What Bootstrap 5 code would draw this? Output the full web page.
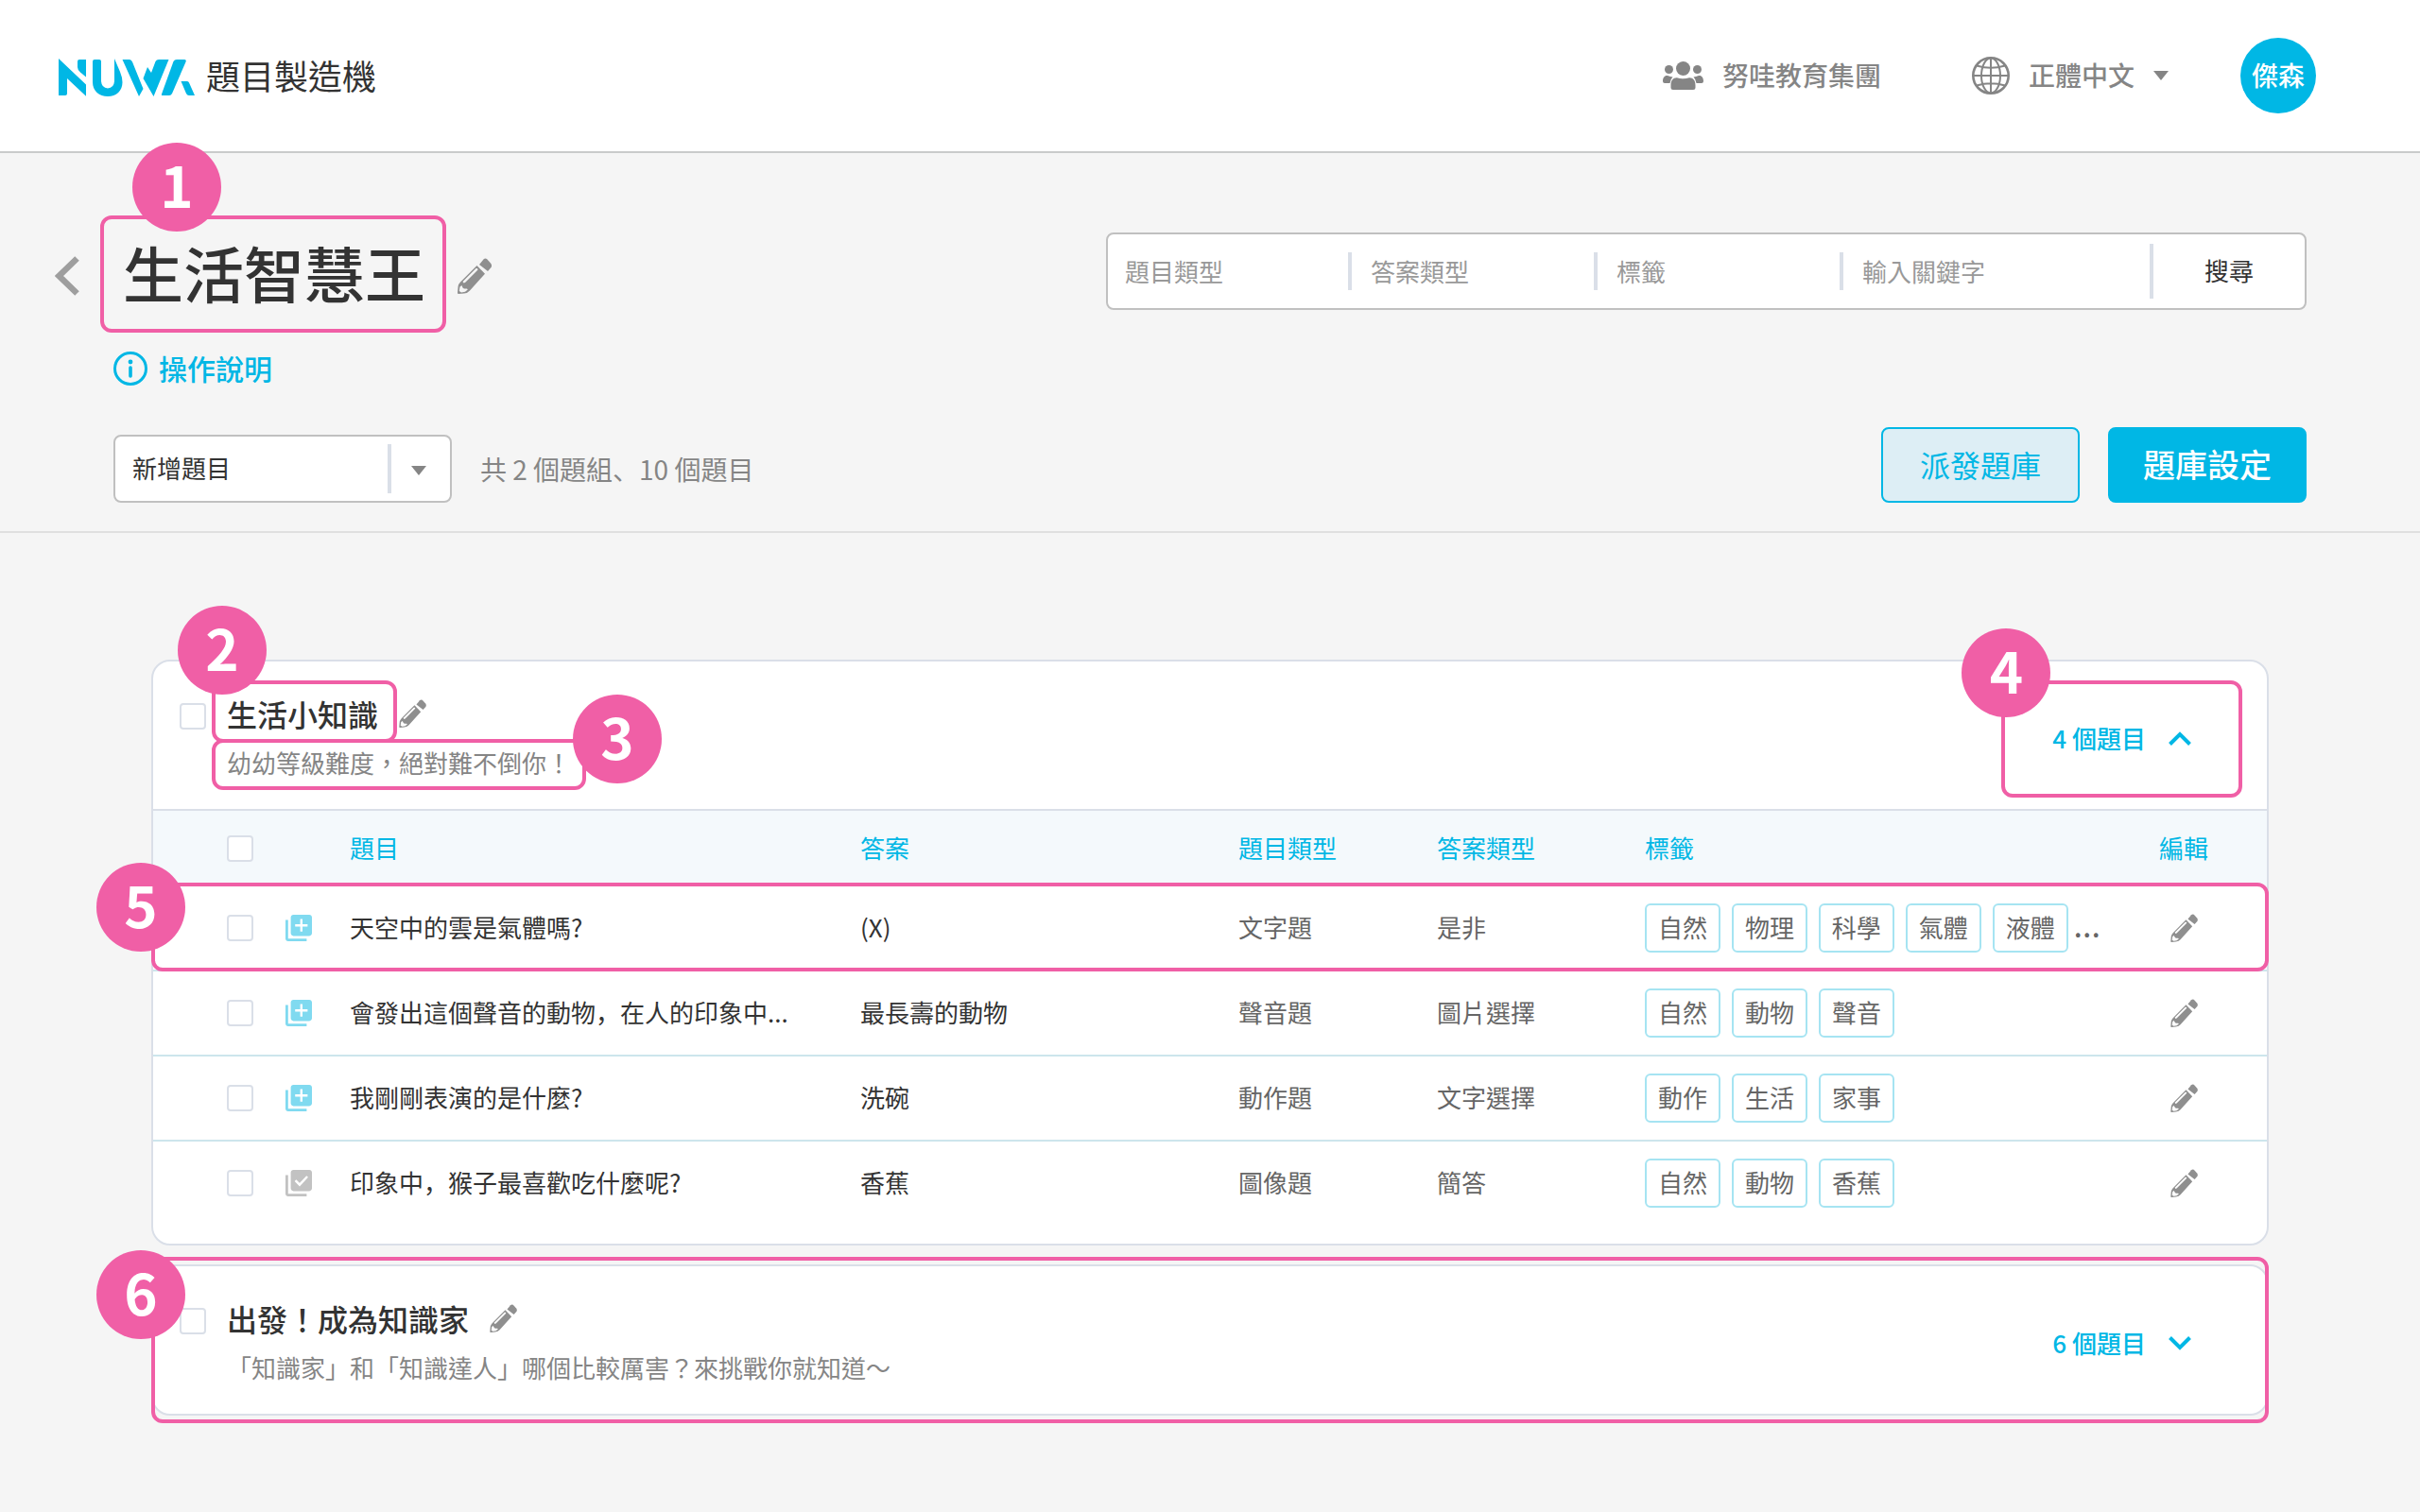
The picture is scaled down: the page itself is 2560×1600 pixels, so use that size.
<!DOCTYPE html>
<html lang="zh-Hant">
<head>
<meta charset="utf-8">
<meta name="viewport" content="width=device-width, initial-scale=1">
<title>NUWA 題目製造機</title>
<link href="https://cdn.jsdelivr.net/npm/bootstrap@5.3.0/dist/css/bootstrap.min.css" rel="stylesheet">
<style>
:root{--brand:#00b7e5;--ink:#333;--soft:#858585;--line:#dadfe8;--note:#f05fa6}
body{font-family:"Noto Sans CJK TC",sans-serif;font-size:26px;line-height:40px;color:var(--ink);background:#f5f5f5}
/* full-width punctuation sits at the lower left instead of the centre */
.font-alt{font-family:"Noto Sans CJK SC","Noto Sans CJK TC",sans-serif;font-feature-settings:"locl" 0}
svg{display:block;flex:none}
.plain-btn{border:0;background:none;padding:0;color:inherit;font-weight:500;line-height:40px}
.fs-28{font-size:28px}
.fw-mid{font-weight:500}
.text-soft{color:var(--soft)}
.lift{padding-bottom:2px}

.topbar{height:162px;padding:0 110px 0 62px;background:#fff;border-bottom:2px solid #c9cbcb}
.brand-name{font-size:36px;color:var(--ink)}
.avatar{width:80px;height:80px;margin-left:76px;border-radius:50%;background:var(--brand);color:#fff}

.bank{padding:66px 120px 30px;border-bottom:2px solid #e0e0e0}
.back-link{margin-left:-62px;margin-right:22px}
.bank-title{font-size:64px;line-height:92px;font-weight:500;margin:0;padding:9px 18px 15px 20px;border:4px solid var(--note);border-radius:12px}
.help-row{height:36px;margin:20px 0 44px;font-size:30px}
.help-row a{color:var(--brand);text-decoration:none}

.search-box{flex:0 1 1270px;height:82px;margin-top:18px;background:#fff;border:2px solid #c0c0c0;border-radius:8px}
.search-box input{width:260px;height:40px;padding:0 20px;border:0;border-right:4px solid var(--line);border-radius:0;background:none;font-size:26px;line-height:40px;color:var(--ink);box-shadow:none}
.search-box input:first-of-type{width:258px;padding-left:18px}
.search-box input::placeholder{color:#999;opacity:1}
.search-box input:last-of-type{border-right:0;flex:1}
.search-go{width:164px;height:58px;padding-bottom:2px;border-left:4px solid var(--line);font-weight:400}

.add-select{width:358px;margin-right:30px}
.add-select select{height:72px;padding:0 80px 2px 18px;border:2px solid #c0c0c0;border-radius:8px;background:#fff;font-size:26px;line-height:40px;color:var(--ink)}
.add-select::before{content:"";position:absolute;right:64px;top:10px;width:4px;height:52px;background:var(--line)}
.add-select svg{position:absolute;right:27px;top:33px;pointer-events:none}
.act-gap{gap:30px}
.act-btn{width:210px;height:80px;padding:0 0 3px;font-size:32px;line-height:40px;border:2px solid var(--brand);border-radius:8px;color:var(--brand);background:#ddeef5}
.act-btn.solid{background:var(--brand);color:#fff;font-weight:500;font-size:34px}

.groups{padding:134px 160px 94px;gap:20px}
.group-card{background:#fff;border:2px solid var(--line);border-radius:20px}
.group-head{height:156px;padding:35px 80px 0 28px}
.group-head.open{height:158px;border-bottom:2px solid var(--line)}
.form-check-input.tick{width:28px;height:28px;margin:0;border:2px solid var(--line);border-radius:4px;background-color:#fff;display:block;float:none}
.group-head .form-check-input.tick{margin:9px 22px 0 0}
.group-name{font-size:32px;line-height:40px;font-weight:500;margin:0}
.name-edit{margin-left:22px}
.group-desc{color:var(--soft);margin:12px 0 0;line-height:40px}
.group-toggle{color:var(--brand);gap:24px;margin-top:26px}

.ring{position:absolute;border:4px solid var(--note);border-radius:12px;pointer-events:none}
.pin{position:absolute;width:94px;height:94px;border-radius:50%;background:var(--note);color:#fff;font-size:60px;line-height:86px;font-weight:700;text-align:center;z-index:2}
.pin-1{left:34px;top:-77px}
.ring-name{inset:-15px -20px -11px -16px}
.ring-desc{inset:-5px -16px -9px -16px}
.ring-toggle{inset:-15px -54px -43px -54px}
.pin-2{left:-52px;top:-94px}
.pin-3{right:-96px;top:-52px}
.pin-4{left:-46px;top:-59px}
.ring-row{inset:-4px -2px 0 -2px}
.pin-row{left:-60px;top:-25px}
.ring-card{inset:-10px -2px -10px -2px}
.pin-card{left:-60px;top:-17px}

.q-table{table-layout:fixed;width:100%;margin:0 0 18px;border-collapse:separate;border-spacing:0}
.q-table th{height:80px;padding:0;background:#f4f9fc;color:var(--brand);font-weight:400;vertical-align:middle}
.q-table td{height:90px;padding:0;border-bottom:2px solid #cde5ec;vertical-align:middle;white-space:nowrap;color:#666}
.q-table th:not(:first-child),.q-table td.main-txt,.q-table td.side-txt{padding-bottom:2px}
.q-table tbody tr{position:relative}
.q-table tbody tr:last-child td{border-bottom-color:transparent}
.q-table td.main-txt{color:var(--ink)}
.q-table .form-check-input.tick{margin-left:78px}
.tag-list{gap:12px}
.tag-chip{width:80px;height:52px;line-height:46px;text-align:center;border:2px solid #a6e4f2;border-radius:6px}
.tag-more{font-size:34px;margin-left:-6px}
.edit-btn{display:block;margin:0 auto}
</style>
<script src="https://cdn.jsdelivr.net/npm/bootstrap@5.3.0/dist/js/bootstrap.bundle.min.js"></script>
</head>
<body>
<svg width="0" height="0" class="position-absolute" aria-hidden="true">
  <symbol id="pencil" viewBox="0 0 36 38">
    <path fill="#8f8f8f" d="M23 7 27.500 1.500Q29 0 31 1L35 5.500Q37 8 35.500 10L32 14Z"/>
    <path fill="#8f8f8f" fill-rule="evenodd" d="M20.500 8 29 16.700 13 34.500Q11 37 7 37.500L1 38Q0 38 0 37L.6 30Q1 27.500 3 25.500ZM21 11 19.500 11 5.500 25 6.500 26.500 8 26 21.500 12.500ZM4.500 29 2.500 30.500 1.800 35 4 36.500 8 35.800 10.800 33.500 10 32.500 7 32.500 5.500 31.500Z"/>
  </symbol>
  <symbol id="add-copy" viewBox="2 2 20 20"><path fill="#80daf0" d="M4 6H2v14c0 1.100.9 2 2 2h14v-2H4V6zm16-4H8c-1.100 0-2 .9-2 2v12c0 1.100.9 2 2 2h12c1.100 0 2-.9 2-2V4c0-1.100-.9-2-2-2z"/><path fill="none" stroke="#fff" stroke-width="1.700" d="M14 5.300V14.700M9.300 10H18.700"/></symbol>
  <symbol id="added-copy" viewBox="2 2 20 20"><path fill="#c2c2c2" d="M4 6H2v14c0 1.100.9 2 2 2h14v-2H4zM20 2H8c-1.100 0-2 .9-2 2v12c0 1.100.9 2 2 2h12c1.100 0 2-.9 2-2V4c0-1.100-.9-2-2-2z"/><path fill="none" stroke="#fff" stroke-width="1.700" d="M9.500 10 12.700 13.200 18.500 7"/></symbol>
  <symbol id="caret" viewBox="0 0 16 10"><path fill="#858585" d="M0 0H16L8 10Z"/></symbol>
  <symbol id="chev" viewBox="0 0 24 15"><path fill="none" stroke="#00b7e5" stroke-width="4" d="M1.500 13.500 12 3 22.500 13.500"/></symbol>
</svg>

<header class="topbar d-flex align-items-center justify-content-between">
  <a href="#" class="d-flex align-items-center text-decoration-none">
    <svg class="mt-1" width="144" height="40" viewBox="0 0 144 40" fill="#00b7e5" role="img" aria-label="NUWA">
      <path d="M0 0 29 27.500V39.700L9 21V37Q9 39 7 39H0Z"/>
      <path d="M20 3Q20 1 22 1H29V19.500L23 14.500Q20 12 20 9Z"/>
      <path d="M36 3Q36 1 38 1H43Q45 1 45 3V24Q45.500 31 52 31.500 58.500 31 59 24V0L65 14Q67.500 20 67.500 25C67.500 34 61 40 52 40S36 34 36 25Z"/>
      <path d="M67.500 1H75Q77 1 78 3.500L89.500 32 85 40Z"/>
      <path d="M94 9 98 15 102.500 3Q103.500 1 106 1H116.500L100.500 40 89.500 21Z"/>
      <path d="M121.500 3Q122.500 1 125 1H133Q135.500 1 134.500 3.500L120 37Q119 39 117 39H109.500Q108.500 39 109 37.500Z"/>
      <path d="M129.500 24H136Q137.500 24 138 25.500L144 39H138Q136 39 135 37Z"/>
    </svg>
    <span class="brand-name lift ms-2 ps-1">題目製造機</span>
  </a>
  <nav class="d-flex align-items-center fs-28 text-soft fw-mid">
    <div class="d-flex align-items-center">
      <svg width="43" height="30" viewBox="0 0 43 30" fill="#858585" aria-hidden="true">
        <circle cx="21.500" cy="7.500" r="7.500"/><circle cx="6.500" cy="8.500" r="4.500"/><circle cx="36.500" cy="8.500" r="4.500"/>
        <path d="M8.500 25.500C8.500 20 11 17 15 17.200Q21.500 19.500 28 17.200C32 17 34.500 20 34.500 25.500V27.500Q34.500 30 32 30H11Q8.500 30 8.500 27.500Z"/>
        <path d="M10.500 16.500Q8 19 7.500 23H2Q0 23 0 21C0 17 2 14.500 5 15Q8 16 10.500 16.500Z"/>
        <path d="M32.500 16.500Q35 19 35.500 23H41Q43 23 43 21C43 17 41 14.500 38 15Q35 16 32.500 16.500Z"/>
      </svg>
      <span class="lift ms-3 ps-1">努哇教育集團</span>
    </div>
    <button type="button" class="plain-btn d-flex align-items-center ms-5 ps-5">
      <svg width="40" height="40" viewBox="0 0 40 40" fill="none" stroke="#858585" stroke-width="2" aria-hidden="true">
        <circle cx="20" cy="20" r="18.700" stroke-width="2.600"/><ellipse cx="20" cy="20" rx="10" ry="18.500"/><path d="M20 1V39M1 20H39M5 9.500Q20 14 35 9.500M5 30.500Q20 26 35 30.500"/>
      </svg>
      <span class="lift ms-3 me-3 ps-1 pe-1">正體中文</span>
      <svg width="16" height="10" aria-hidden="true"><use href="#caret"/></svg>
    </button>
    <button type="button" class="avatar plain-btn lift text-white">傑森</button>
  </nav>
</header>

<section class="bank">
  <div class="d-flex align-items-start justify-content-between">
    <div class="d-flex align-items-center">
      <a href="#" class="back-link pt-1" aria-label="返回"><svg width="26" height="42" viewBox="0 0 26 42" fill="none" stroke="#9e9e9e" stroke-width="6.500"><path d="M23.500 2.500 4.500 21 23.500 39.500"/></svg></a>
      <div class="position-relative">
        <h1 class="bank-title">生活智慧王</h1>
        <span class="pin pin-1">1</span>
      </div>
      <button type="button" class="plain-btn ms-2 ps-1 pt-1" aria-label="編輯題庫名稱"><svg width="36" height="38"><use href="#pencil"/></svg></button>
    </div>
    <form class="search-box d-flex align-items-center">
      <input class="form-control" type="text" placeholder="題目類型" aria-label="題目類型">
      <input class="form-control" type="text" placeholder="答案類型" aria-label="答案類型">
      <input class="form-control" type="text" placeholder="標籤" aria-label="標籤">
      <input class="form-control" type="text" placeholder="輸入關鍵字" aria-label="輸入關鍵字">
      <button type="button" class="search-go plain-btn">搜尋</button>
    </form>
  </div>
  <div class="help-row d-flex align-items-center">
    <a href="#" class="d-flex align-items-center fw-mid">
      <svg width="36" height="36" viewBox="0 0 36 36" fill="none" stroke="#00b7e5" stroke-width="3" aria-hidden="true"><circle cx="18" cy="18" r="16.500"/><path d="M18 17V26" stroke-width="3.600" stroke-linecap="round"/><circle cx="18" cy="11" r="2.400" fill="#00b7e5" stroke="none"/></svg>
      <span class="lift ms-2 ps-1">操作說明</span>
    </a>
  </div>
  <div class="d-flex align-items-end justify-content-between">
    <div class="d-flex align-items-center">
      <div class="add-select position-relative">
        <select class="form-select" aria-label="新增題目"><option>新增題目</option></select>
        <svg width="16" height="10" aria-hidden="true"><use href="#caret"/></svg>
      </div>
      <span class="fs-28 text-soft font-alt">共 2 個題組、10 個題目</span>
    </div>
    <div class="d-flex act-gap">
      <button type="button" class="btn act-btn">派發題庫</button>
      <button type="button" class="btn act-btn solid">題庫設定</button>
    </div>
  </div>
</section>

<main class="groups d-flex flex-column">
  <section class="group-card">
    <div class="group-head open d-flex">
      <input type="checkbox" class="form-check-input tick" aria-label="選取生活小知識">
      <div>
        <div class="d-flex align-items-center">
          <div class="position-relative"><h2 class="group-name">生活小知識</h2><span class="ring ring-name"></span><span class="pin pin-2">2</span></div>
          <button type="button" class="plain-btn name-edit" aria-label="編輯題組"><svg width="29" height="30"><use href="#pencil"/></svg></button>
        </div>
        <div class="position-relative group-desc">幼幼等級難度，絕對難不倒你！<span class="ring ring-desc"></span><span class="pin pin-3">3</span></div>
      </div>
      <div class="ms-auto position-relative align-self-start">
        <button type="button" class="plain-btn group-toggle d-flex align-items-center">4 個題目<svg width="24" height="15"><use href="#chev"/></svg></button>
        <span class="ring ring-toggle"><span class="pin pin-4">4</span></span>
      </div>
    </div>
    <table class="q-table">
      <colgroup><col style="width:140px"><col style="width:68px"><col><col style="width:400px"><col style="width:210px"><col style="width:220px"><col style="width:482px"><col style="width:176px"></colgroup>
      <thead>
        <tr><th><input type="checkbox" class="form-check-input tick" aria-label="全選"></th><th></th><th>題目</th><th>答案</th><th>題目類型</th><th>答案類型</th><th>標籤</th><th class="text-center">編輯</th></tr>
      </thead>
      <tbody>
        <tr>
          <td><input type="checkbox" class="form-check-input tick" aria-label="選取題目 1"><span class="ring ring-row"></span><span class="pin pin-row">5</span></td>
          <td><svg width="28" height="28"><use href="#add-copy"/></svg></td>
          <td class="main-txt font-alt">天空中的雲是氣體嗎?</td><td class="main-txt font-alt">(X)</td><td class="side-txt">文字題</td><td class="side-txt">是非</td>
          <td><div class="d-flex align-items-baseline tag-list"><span class="tag-chip">自然</span><span class="tag-chip">物理</span><span class="tag-chip">科學</span><span class="tag-chip">氣體</span><span class="tag-chip">液體</span><span class="tag-more">...</span></div></td>
          <td><button type="button" class="plain-btn edit-btn" aria-label="編輯"><svg width="29" height="30"><use href="#pencil"/></svg></button></td>
        </tr>
        <tr>
          <td><input type="checkbox" class="form-check-input tick" aria-label="選取題目 2"></td>
          <td><svg width="28" height="28"><use href="#add-copy"/></svg></td>
          <td class="main-txt font-alt">會發出這個聲音的動物，在人的印象中...</td><td class="main-txt font-alt">最長壽的動物</td><td class="side-txt">聲音題</td><td class="side-txt">圖片選擇</td>
          <td><div class="d-flex tag-list"><span class="tag-chip">自然</span><span class="tag-chip">動物</span><span class="tag-chip">聲音</span></div></td>
          <td><button type="button" class="plain-btn edit-btn" aria-label="編輯"><svg width="29" height="30"><use href="#pencil"/></svg></button></td>
        </tr>
        <tr>
          <td><input type="checkbox" class="form-check-input tick" aria-label="選取題目 3"></td>
          <td><svg width="28" height="28"><use href="#add-copy"/></svg></td>
          <td class="main-txt font-alt">我剛剛表演的是什麼?</td><td class="main-txt font-alt">洗碗</td><td class="side-txt">動作題</td><td class="side-txt">文字選擇</td>
          <td><div class="d-flex tag-list"><span class="tag-chip">動作</span><span class="tag-chip">生活</span><span class="tag-chip">家事</span></div></td>
          <td><button type="button" class="plain-btn edit-btn" aria-label="編輯"><svg width="29" height="30"><use href="#pencil"/></svg></button></td>
        </tr>
        <tr>
          <td><input type="checkbox" class="form-check-input tick" aria-label="選取題目 4"></td>
          <td><svg width="28" height="28"><use href="#added-copy"/></svg></td>
          <td class="main-txt font-alt">印象中，猴子最喜歡吃什麼呢?</td><td class="main-txt font-alt">香蕉</td><td class="side-txt">圖像題</td><td class="side-txt">簡答</td>
          <td><div class="d-flex tag-list"><span class="tag-chip">自然</span><span class="tag-chip">動物</span><span class="tag-chip">香蕉</span></div></td>
          <td><button type="button" class="plain-btn edit-btn" aria-label="編輯"><svg width="29" height="30"><use href="#pencil"/></svg></button></td>
        </tr>
      </tbody>
    </table>
  </section>

  <section class="group-card position-relative">
    <div class="group-head d-flex">
      <input type="checkbox" class="form-check-input tick" aria-label="選取出發！成為知識家">
      <div>
        <div class="d-flex align-items-center">
          <h2 class="group-name">出發！成為知識家</h2>
          <button type="button" class="plain-btn name-edit" aria-label="編輯題組"><svg width="29" height="30"><use href="#pencil"/></svg></button>
        </div>
        <p class="group-desc">「知識家」和「知識達人」哪個比較厲害？來挑戰你就知道～</p>
      </div>
      <button type="button" class="plain-btn group-toggle d-flex align-items-center ms-auto align-self-start">6 個題目<svg width="24" height="15" viewBox="0 0 24 15" fill="none" stroke="#00b7e5" stroke-width="4"><path d="M1.500 1.500 12 12 22.500 1.500"/></svg></button>
    </div>
    <span class="ring ring-card"></span><span class="pin pin-card">6</span>
  </section>
</main>
</body>
</html>
